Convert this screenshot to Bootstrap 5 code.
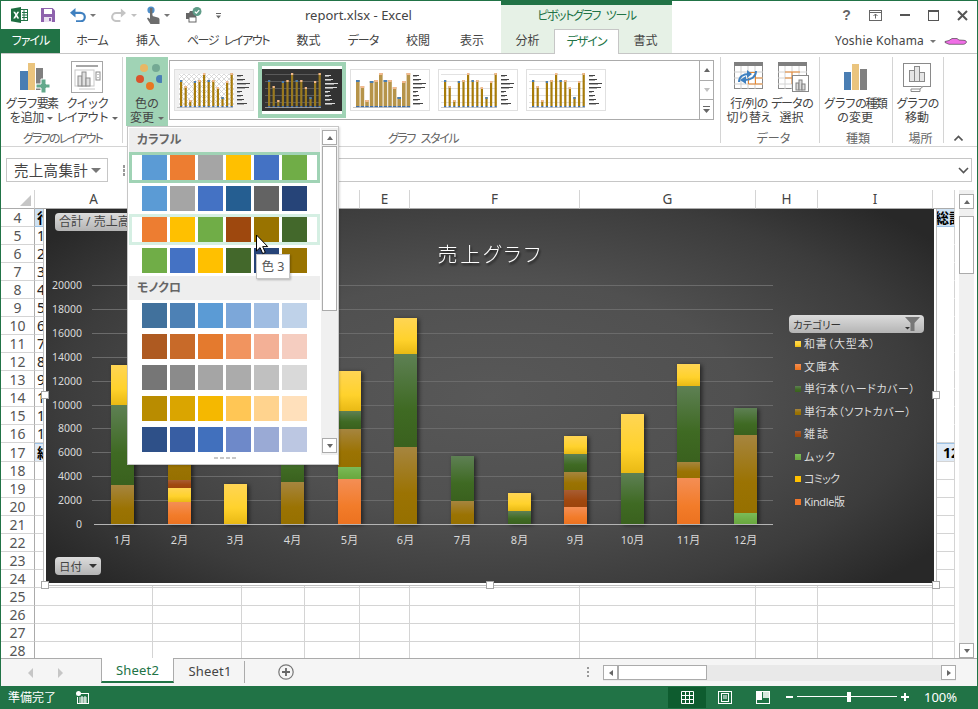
<!DOCTYPE html>
<html lang="ja">
<head>
<meta charset="utf-8">
<title>report.xlsx - Excel</title>
<link href="https://cdn.jsdelivr.net/npm/bootstrap@5.3.0/dist/css/bootstrap.min.css" rel="stylesheet">
<style>
html,body{margin:0;width:978px;height:709px;overflow:hidden;background:#fff}
body{font-family:"Noto Sans","Noto Sans CJK JP",sans-serif;font-feature-settings:"palt";font-size:12px;color:#444;line-height:14px}
.xl-win{position:relative;width:978px;height:709px;border:1px solid #217346;border-bottom:0;background:#fff;overflow:hidden}
svg{display:block;flex:none}
/* title row */
.xl-title{height:28px}
.xl-qat{width:500px;padding-left:10px;flex:none}
.m4{margin-left:4px}.m5{margin-left:5px}.m9{margin-left:9px}.m13{margin-left:13px}.m14{margin-left:14px}.m15{margin-left:15px}
.xl-doc{margin-left:84px;font-size:13px;color:#444}
.xl-context{width:171px;flex:none;border-top:4px solid #217346;background:#e6f1e6;color:#217346;text-align:center;padding-top:4px;font-size:12px;line-height:14px;letter-spacing:-1.4px;word-spacing:4px}
.xl-ctl{width:29px;height:28px;flex:none}
.xl-help{font-weight:700;font-size:14px;color:#666;font-family:"Liberation Sans",sans-serif}
/* tab row */
.xl-tabs{height:25px;border-bottom:1px solid #c6c6c6;flex-wrap:nowrap}
.xl-tabs .nav-link{padding:0;height:24px;line-height:24px;font-size:12px;color:#444;text-align:center;flex:none;border:0;border-radius:0}
.xl-tabs .nav-link.xl-kn{letter-spacing:-1px}
.xl-tabs .nav-link.xl-kns{letter-spacing:-1.4px;word-spacing:4px}
.xl-tabs .xl-file{width:59px;background:#217346;color:#fff}
.t64{width:64px}.t48{width:48px}.t112{width:112px}.t49{width:49px}.t60{width:60px}.t50{width:50px}.t58{width:58px}.t53{width:53px}
.xl-tabs .xl-active{width:65px;height:25px;background:#fff;border:1px solid #c6c6c6;border-bottom:0;color:#217346}
.xl-ctxgroup{background:#e6f1e6;width:171px;flex:none;height:24px}
.xl-user{font-size:12px;color:#444;margin-right:10px;letter-spacing:.2px}
/* ribbon */
.xl-ribbon{height:93px;border-bottom:1px solid #d4d4d4;padding-top:3px}
.xl-grp{height:86px;border-right:1px solid #d4d4d4;flex:none}
.g1{width:122px;padding-left:2px}.g2{width:598px;padding-left:3px}.g3{width:99px;padding-left:7px}.g4{width:73px;padding-left:4px}.g5{width:51px;padding-left:5px}
.xl-grpbody{height:69px}
.xl-grplabel{margin-top:5px;height:16px;line-height:16px;text-align:center;color:#666;font-size:12px}
.xl-grplabel.xl-tight{letter-spacing:-1.8px}
.xl-grplabel.xl-tights{letter-spacing:-1.4px;word-spacing:4px}
.xl-rbtn.btn{padding:0;border:0;border-radius:0;font-size:12px;line-height:14px;color:#444;display:flex;flex-direction:column;align-items:center;height:69px;flex:none;white-space:nowrap}
.xl-rbtn .xl-ico{height:40px;flex:none;display:flex;align-items:center;justify-content:center;width:100%}
.xl-rbtn .xl-ks{letter-spacing:-1.6px}
.xl-rbtn .xl-ks1{letter-spacing:-.7px}
.xl-rbtn.xl-on{background:#a0d3b5}
.w57{width:57px}.w54{width:54px}.w42{width:42px}.w43{width:43px}.w62{width:62px}.w38{width:38px}
.xl-car{display:inline-block;width:0;height:0;border-left:3px solid transparent;border-right:3px solid transparent;border-top:3px solid #666;vertical-align:2px;margin-left:4px}
.xl-gallery{width:545px;height:60px;margin:3px 0 0 1px;border:1px solid #ababab;flex:none;background:#fff}
.xl-thumbs{padding:1px 0 0 0;flex:1}
.xl-thumb{width:88px;height:56px;padding:7px 4px;flex:none}
.xl-thumb.xl-sel{border:0;background:#a0d3b5;padding:4px}
.xl-thumb.xl-sel .xl-whitebox{background:#fff;height:48px;padding-top:3px}
.xl-galbtns{width:14px;border-left:1px solid #ababab;flex:none}
.xl-galbtn{flex:1;border-bottom:1px solid #ababab;display:flex;align-items:center;justify-content:center}
.xl-galbtn:last-child{border-bottom:0}
.tri-u{width:0;height:0;border:3px solid transparent;border-top:0;border-bottom:4px solid #666}
.tri-d{width:0;height:0;border:3px solid transparent;border-bottom:0;border-top:4px solid #666}
.tri-l{width:0;height:0;border:3px solid transparent;border-left:0;border-right:4px solid #666}
.tri-r{width:0;height:0;border:3px solid transparent;border-right:0;border-left:4px solid #666}
/* formula */
.xl-fbar{height:43px;padding:11px 0 0 5px}
.xl-name{width:102px;height:24px;border:1px solid #c6c6c6;font-size:14.5px;padding-left:7px;flex:none;color:#444;letter-spacing:.3px}
.xl-grip{width:2px;height:3px;background:#999;box-shadow:0 4px 0 #999,0 8px 0 #999;margin:7px 0 0 15px;flex:none}
.xl-input{height:24px;margin-left:7px;width:840px;border:1px solid #c6c6c6;flex:none}
.xl-chev{margin:9px 0 0 -14px}
/* sheet */
.xl-sheet{position:relative;height:468px;overflow:hidden}
.xl-grid{table-layout:fixed;width:954px;border-collapse:separate;border-spacing:0;flex:none}
.xl-grid th,.xl-grid td{height:18px;padding:0;border-right:1px solid #d4d4d4;border-bottom:1px solid #d4d4d4;overflow:hidden;white-space:nowrap;line-height:17px;font-weight:400;font-size:14px;color:#222}
.xl-grid thead th{height:19px;border-bottom:1px solid #ababab;text-align:center;color:#444;font-size:13.5px;position:relative}
.xl-grid th.xl-rh{text-align:center;border-right:1px solid #ababab;color:#555;font-size:14px}
.xl-grid td{padding-left:2px}
.xl-grid td.xl-hd{background:#cfe2f3;border-bottom:1px solid #9dc3e6;font-weight:700;color:#000}
.xl-grid td.xl-tot{background:#dfeaf6;font-weight:700;color:#000;border-top:1px solid #9dc3e6}
.xl-grid td.xl-nob{border-bottom-color:transparent}
.xl-grid td.xl-pad{padding-left:10px}
.xl-corner{position:absolute;right:3px;bottom:2px;width:0;height:0;border-style:solid;border-width:0 0 11px 11px;border-color:transparent transparent #c6c6c6 transparent}
.xl-vs{width:22px;flex:none;padding:0 3px 0 4px;background:#fff}
.xl-vtrack{background:#f0f0f0;height:100%;padding-top:4px;position:relative}
.xl-sbtn{background:#fff;border:1px solid #ababab;width:15px;height:15px;display:flex;align-items:center;justify-content:center}
.xl-vthumb{background:#fff;border:1px solid #ababab;width:15px;height:58px;margin-top:7px}
.xl-vdown{position:absolute;left:0;bottom:0}
/* chart */
.xl-chart{position:absolute;left:42px;top:19px;width:894px;height:377px;border:1px solid #c0c0c0;border-top:0;padding:0 2px 2px 2px;background:#fff}
.xl-chartbg{width:888px;height:374px;background:radial-gradient(ellipse 62% 70% at 50% 50%,#585858 0%,#505050 45%,#3c3c3c 78%,#282828 100%);overflow:hidden}
.xl-h{position:absolute;width:8px;height:8px;background:#fff;border:1px solid #a6a6a6}
.xl-h1{left:-3px;top:182px}.xl-h2{left:-3px;top:372px}.xl-h3{left:442px;top:372px}.xl-h4{left:888px;top:182px}.xl-h5{left:888px;top:372px}
.xl-chart text{font-family:"Noto Sans","Noto Sans CJK JP",sans-serif}
/* palette */
.xl-palette.dropdown-menu{display:block;position:absolute;left:126px;top:125px;width:212px;height:339px;min-width:0;padding:1px;margin:0;border:1px solid #c6c6c6;border-radius:0;background:#fff;box-shadow:1px 1px 2px rgba(0,0,0,.15);z-index:5;font-size:12px}
.xl-palcol{width:191px;flex:none}
.xl-palhead{height:24px;line-height:24px;background:#eee;padding-left:8px;color:#666;font-weight:700;font-size:12px}
.xl-palrow{height:31px;border:3px solid transparent;padding-left:10px;gap:3px}
.xl-palrow.xl-r1{border-color:#a0d3b5}
.xl-palrow.xl-r3{border-color:#d5efe3}
.xl-sw{width:25px;height:25px;flex:none}
.xl-palgrip{height:9px;width:191px;gap:2px;padding-top:2px}
.xl-palgrip i{width:4px;height:2px;background:#c8c8c8;display:block}
.xl-palsb{width:17px;margin-left:1px;flex:none;background:#f0f0f0;height:327px;padding:2px 1px;position:relative}
.xl-palthumb{background:#fff;border:1px solid #ababab;height:165px;width:15px;margin-top:1px}
.xl-palsb .xl-sbdown{position:absolute;left:1px;bottom:2px}
.xl-tip{position:absolute;left:255px;top:253px;width:34px;height:25px;background:#fff;border:1px solid #c6c6c6;box-shadow:1px 1px 2px rgba(0,0,0,.25);z-index:7;text-align:center;line-height:23px;font-size:12.5px;color:#555}
.xl-cursor{position:absolute;left:254px;top:233px;z-index:8}
/* sheet tabs */
.xl-strip{height:28px;background:#f5f5f5;border-top:1px solid #ababab}
.xl-arrows{width:100px;flex:none;padding-left:27px;gap:25px;height:27px}
.xl-arrows .tri-l{border-right-color:#c6c6c6;border-width:5px 5px 5px 0}
.xl-arrows .tri-r{border-left-color:#c6c6c6;border-width:5px 0 5px 5px}
.xl-sheettab{width:73px;height:25px;margin-top:-1px;line-height:24px;background:#fff;border:1px solid #ababab;border-top:0;border-bottom:2px solid #217346;color:#217346;text-align:center;font-size:13px;flex:none;letter-spacing:.2px}
.xl-sheettab2{width:72px;height:22px;line-height:20px;text-align:center;font-size:13px;color:#444;border-right:1px solid #ababab;flex:none;margin-top:2px;margin-left:-1px;padding-left:3px;letter-spacing:.2px}
.xl-plus{margin-left:33px;margin-top:5px}
.xl-hdots{position:absolute;left:586px;top:8px;width:2px;height:2px;background:#999;box-shadow:0 4px 0 #999,0 8px 0 #999}
.xl-hs{position:absolute;left:602px;top:6px;width:353px;height:16px;background:#e9e9e9}
.xl-hs .xl-sbtn{height:15px;flex:none}
.xl-hthumb{width:89px;height:15px;background:#fff;border:1px solid #ababab;flex:none}
/* status */
.xl-status{height:23px;background:#217346;color:#fff;position:relative}
.xl-ready{margin-left:7px;font-size:12px}
.xl-macro{margin-left:20px}
.xl-vbtn{position:absolute;top:1px;height:21px;display:flex;align-items:center;justify-content:center}
.xl-vn{left:667px;width:38px;background:#0e5c2f}
.xl-vl{left:717px}.xl-vp{left:755px}
.xl-pct{position:absolute;left:923px;top:0;line-height:23px;font-size:13px;color:#fff}
.xl-zoomline{position:absolute;left:796px;top:10px;width:100px;height:1px;background:#fff}
.xl-zoomth{position:absolute;left:846px;top:6px;width:4px;height:10px;background:#fff}
.xl-zm{position:absolute;left:785px;top:10px;width:7px;height:2px;background:#fff}
.xl-zp{position:absolute;left:900px;top:10px;width:8px;height:2px;background:#fff}
.xl-zp::after{content:"";position:absolute;left:3px;top:-3px;width:2px;height:8px;background:#fff}
.xl-qcar{border-top-color:#777;border-top-width:3px}
.xl-qcarl{border-top-color:#c0c0c0;border-top-width:3px}
.xl-ucar{margin-left:6px}
.xl-blob{margin-left:8px}
.xl-up3{margin-top:-3px}
.xl-ml6{margin-left:6px}.xl-ml3{margin-left:3px}
.xl-collapse{padding:0 4px 5px 0}
.xl-namecar{margin-right:6px;border-width:5px 5px 0;border-top-color:#777}
.xl-gd{border-top-color:#c0c0c0}
</style>
</head>
<body>
<div class="xl-win d-flex flex-column">

  <!-- title bar -->
  <div class="xl-title d-flex align-items-stretch">
    <div class="xl-qat d-flex align-items-center">
      <svg width="17" height="16" viewBox="0 0 17 16"><rect x="8.5" y="2.5" width="8" height="11" fill="#fff" stroke="#217346"/><path d="M11 5.5h5M11 8h5M11 10.5h5M13 3v10" stroke="#217346" fill="none"/><path d="M0 1.8 10 0v16L0 14.2z" fill="#1e6e41"/><path d="M2.2 4.8h2l1 1.9 1-1.9h2L6.2 8l2 3.4h-2l-1-2-1 2h-2L4.3 8z" fill="#fff"/></svg>
      <svg class="m13" width="14" height="14" viewBox="0 0 14 14"><path d="M0 0h11.5L14 2.5V14H0z" fill="#8e62ad"/><rect x="3" y="1" width="8" height="5" fill="#fff"/><rect x="3" y="9" width="8" height="5" fill="#e9e0f0"/><rect x="8" y="10" width="2" height="3" fill="#8e62ad"/></svg>
      <svg class="m15" width="16" height="14" viewBox="0 0 16 14"><path d="M4 4.8h6.5a4.3 4.3 0 0 1 0 8.6H6" fill="none" stroke="#3f80c0" stroke-width="2.2"/><path d="M5.5 0 0 4.8l5.5 4.8z" fill="#3f80c0"/></svg>
      <span class="tri-d m4 xl-qcar"></span>
      <svg class="m15" width="15" height="14" viewBox="0 0 16 14"><path d="M12 4.8H5.5a4.3 4.3 0 0 0 0 8.6H10" fill="none" stroke="#c4c4c4" stroke-width="2.2"/><path d="M10.5 0 16 4.8l-5.5 4.8z" fill="#c4c4c4"/></svg>
      <span class="tri-d m5 xl-qcarl"></span>
      <svg class="m9" width="14" height="18" viewBox="0 0 14 18"><circle cx="5" cy="4" r="3.6" fill="#4f8ec9"/><rect x="4" y="2" width="2.4" height="9" fill="#6d6d6d"/><path d="M4 9h2.4v1l5.4 1.4c1 .3 1.7 1 1.7 2V18H4.5L1 12.5l1-1 2 1.5z" fill="#6d6d6d"/></svg>
      <span class="tri-d m4 xl-qcar"></span>
      <svg class="m15" width="17" height="17" viewBox="0 0 17 17"><path d="M1 6h3l1-2h3v2h3v6H1z" fill="#666"/><rect x="4" y="10" width="7" height="5" fill="#fff" stroke="#666"/><circle cx="12" cy="4.5" r="4.5" fill="#5f9c88"/><path d="M9.8 4.6l1.6 1.6 2.8-3" fill="none" stroke="#fff" stroke-width="1.2"/></svg>
      <svg class="m14" width="5" height="7" viewBox="0 0 5 7"><path d="M0 1h5v1H0z" fill="#666"/><path d="M0 3.5h5L2.5 6.5z" fill="#666"/></svg>
      <span class="xl-doc">report.xlsx - Excel</span>
    </div>
    <div class="xl-context">ピボットグラフ ツール</div>
    <div class="flex-grow-1"></div>
    <div class="xl-ctl d-flex align-items-center justify-content-center xl-help">?</div>
    <div class="xl-ctl d-flex align-items-center justify-content-center"><svg width="13" height="11" viewBox="0 0 13 11"><rect x=".5" y=".5" width="12" height="10" fill="none" stroke="#666"/><path d="M.5 2.5h12" stroke="#666"/><path d="M6.5 4v4.5M4.5 6l2-2 2 2" fill="none" stroke="#666"/></svg></div>
    <div class="xl-ctl d-flex align-items-center justify-content-center"><svg width="10" height="2" viewBox="0 0 10 2"><rect width="10" height="2" fill="#555"/></svg></div>
    <div class="xl-ctl d-flex align-items-center justify-content-center"><svg width="11" height="11" viewBox="0 0 11 11"><rect x=".5" y=".5" width="10" height="10" fill="none" stroke="#555"/><rect x="0" y="0" width="11" height="2" fill="#555"/></svg></div>
    <div class="xl-ctl d-flex align-items-center justify-content-center"><svg width="11" height="11" viewBox="0 0 11 11"><path d="M1 1l9 9M10 1l-9 9" stroke="#555" stroke-width="2"/></svg></div>
  </div>

  <!-- ribbon tabs -->
  <div class="xl-tabs d-flex">
    <ul class="nav flex-nowrap">
      <li><a class="nav-link xl-file xl-kn">ファイル</a></li>
      <li><a class="nav-link t64 xl-kn">ホーム</a></li>
      <li><a class="nav-link t48">挿入</a></li>
      <li><a class="nav-link t112 xl-kns">ページ レイアウト</a></li>
      <li><a class="nav-link t49">数式</a></li>
      <li><a class="nav-link t60 xl-kn">データ</a></li>
      <li><a class="nav-link t50">校閲</a></li>
      <li><a class="nav-link t58">表示</a></li>
    </ul>
    <ul class="nav flex-nowrap xl-ctxgroup">
      <li><a class="nav-link t53">分析</a></li>
      <li><a class="nav-link xl-active xl-kn">デザイン</a></li>
      <li><a class="nav-link t53">書式</a></li>
    </ul>
    <div class="flex-grow-1"></div>
    <div class="d-flex align-items-center xl-user"><span>Yoshie Kohama</span>
      <span class="tri-d xl-ucar xl-qcar"></span>
      <svg class="xl-blob" width="23" height="9" viewBox="0 0 23 9"><path d="M1 4.5 5 3.5 8 1.5h5l2 1.5 5 .3c2 .3 2.5 1.2 2.5 1.7s-1 2-3 2.3H5L1 5.5z" fill="#f06ee6" stroke="#333" stroke-width=".6"/></svg>
    </div>
  </div>

  <!-- ribbon -->
  <div class="xl-ribbon d-flex">
    <div class="xl-grp g1">
      <div class="xl-grpbody d-flex">
        <button class="btn xl-rbtn w57"><span class="xl-ico"><svg class="xl-ml6" width="30" height="31" viewBox="0 0 30 31"><rect x="0" y="9" width="8" height="19" fill="#4a7eb3"/><rect x="8" y="1" width="7" height="27" fill="#eac47e"/><rect x="16" y="6" width="7" height="22" fill="#808080"/><path d="M21 17h5v5h4v4h-4v5h-5v-5h-5v-4h5z" fill="#63a98c" stroke="#fff"/></svg></span><span class="xl-ks">グラフ要素</span><span class="xl-ks1">を追加<i class="xl-car"></i></span></button>
        <button class="btn xl-rbtn w54"><span class="xl-ico"><svg width="32" height="32" viewBox="0 0 32 32"><rect x=".5" y=".5" width="31" height="31" fill="#fff" stroke="#a6a6a6"/><path d="M5 5h22" stroke="#a6a6a6" stroke-width="2"/><rect x="4" y="9" width="19" height="16" fill="none" stroke="#c8c8c8"/><rect x="7" y="15" width="4" height="10" fill="#e0e0e0" stroke="#8c8c8c"/><rect x="11" y="11" width="4" height="14" fill="#e0e0e0" stroke="#8c8c8c"/><rect x="15" y="17" width="4" height="8" fill="#e0e0e0" stroke="#8c8c8c"/><rect x="25" y="11" width="4" height="8" fill="#fff" stroke="#8c8c8c"/><path d="M27 13v1M27 16v1" stroke="#8c8c8c"/><path d="M8 28h16" stroke="#c8c8c8"/></svg></span><span class="xl-ks">クイック</span><span class="xl-ks">レイアウト<i class="xl-car"></i></span></button>
      </div>
      <div class="xl-grplabel xl-tight">グラフのレイアウト</div>
    </div>
    <div class="xl-grp g2">
      <div class="xl-grpbody d-flex">
        <button class="btn xl-rbtn xl-on w42"><span class="xl-ico"><svg width="30" height="30" viewBox="0 0 30 30"><circle cx="12" cy="6" r="4" fill="#e8b765"/><circle cx="24" cy="6" r="4" fill="#74a994"/><circle cx="8" cy="17" r="4" fill="#d9532c"/><circle cx="28" cy="17" r="4" fill="#4a7fb5"/><circle cx="18" cy="24" r="4" fill="#e87722"/></svg></span><span>色の</span><span>変更<i class="xl-car"></i></span></button>
        <div class="xl-gallery d-flex">
          <div class="xl-thumbs d-flex">
            <div class="xl-thumb"><svg class="js-thumb" data-k="hatch" width="80" height="42"></svg></div>
            <div class="xl-thumb xl-sel"><div class="xl-whitebox"><svg class="js-thumb" data-k="dark" width="80" height="42"></svg></div></div>
            <div class="xl-thumb"><svg class="js-thumb" data-k="plain" width="80" height="42"></svg></div>
            <div class="xl-thumb"><svg class="js-thumb" data-k="line" width="80" height="42"></svg></div>
            <div class="xl-thumb"><svg class="js-thumb" data-k="line" width="80" height="42"></svg></div>
          </div>
          <div class="xl-galbtns d-flex flex-column">
            <div class="xl-galbtn"><i class="tri-u"></i></div>
            <div class="xl-galbtn"><i class="tri-d xl-gd"></i></div>
            <div class="xl-galbtn"><svg width="7" height="7" viewBox="0 0 7 7"><path d="M0 0h7v1H0z" fill="#666"/><path d="M0 3h7L3.5 7z" fill="#666"/></svg></div>
          </div>
        </div>
      </div>
      <div class="xl-grplabel xl-tights">グラフ スタイル</div>
    </div>
    <div class="xl-grp g3">
      <div class="xl-grpbody d-flex">
        <button class="btn xl-rbtn w42"><span class="xl-ico"><svg class="xl-up3" width="30" height="28" viewBox="0 0 30 28"><rect x=".5" y=".5" width="28" height="26" fill="#fff" stroke="#8a8a8a"/><rect width="29" height="4" fill="#7f7f7f"/><path d="M0 10h29M0 16h29M0 22h29M7 4v23M14 4v23M21 4v23" stroke="#cfcfcf"/><path d="M14.5 10.5h7v5.5h7M14.5 16v6h14M21.5 16v6" fill="none" stroke="#e8872f"/><path d="M5 20c0-5 4-8 10-8M22 9c0 6-5 9-11 9" fill="none" stroke="#3f80c0" stroke-width="2"/><path d="M13 8l5 4-5 4zM12 14v8l-6-4z" fill="#3f80c0"/></svg></span><span class="xl-ks1">行/列の</span><span class="xl-ks1">切り替え</span></button>
        <button class="btn xl-rbtn w43"><span class="xl-ico"><svg class="xl-ml3" width="31" height="30" viewBox="0 0 31 30"><rect x=".5" y=".5" width="28" height="26" fill="#fff" stroke="#8a8a8a"/><rect width="29" height="4" fill="#7f7f7f"/><path d="M0 10h29M0 16h29M0 22h29M7 4v23M14 4v23M21 4v23" stroke="#d4d4d4"/><path d="M7 10h15M7 16h7M14 10v12" stroke="#e8872f" fill="none"/><rect x="14.5" y="13.5" width="16" height="16" fill="#fff" stroke="#8a8a8a"/><rect x="18" y="21" width="3" height="7" fill="#ddd" stroke="#808080"/><rect x="21" y="18" width="3" height="10" fill="#ddd" stroke="#808080"/><rect x="24" y="22" width="3" height="6" fill="#ddd" stroke="#808080"/></svg></span><span class="xl-ks">データの</span><span>選択</span></button>
      </div>
      <div class="xl-grplabel">データ</div>
    </div>
    <div class="xl-grp g4">
      <div class="xl-grpbody d-flex">
        <button class="btn xl-rbtn w62"><span class="xl-ico"><svg width="23" height="26" viewBox="0 0 23 26"><rect y="8" width="7" height="18" fill="#4a7eb3"/><rect x="8" width="7" height="26" fill="#eac47e"/><rect x="16" y="5" width="7" height="21" fill="#808080"/></svg></span><span class="xl-ks">グラフの種類</span><span>の変更</span></button>
      </div>
      <div class="xl-grplabel">種類</div>
    </div>
    <div class="xl-grp g5">
      <div class="xl-grpbody d-flex">
        <button class="btn xl-rbtn w38"><span class="xl-ico"><svg width="28" height="29" viewBox="0 0 28 29"><rect x=".5" y=".5" width="27" height="23" fill="#fff" stroke="#8a8a8a"/><rect x="6.5" y="7.5" width="5" height="11" fill="#e6e6e6" stroke="#8a8a8a"/><rect x="11.5" y="3.5" width="5" height="15" fill="#e6e6e6" stroke="#8a8a8a"/><rect x="16.5" y="9.5" width="5" height="9" fill="#e6e6e6" stroke="#8a8a8a"/><path d="M8 26h9l3-2.5M8 26v2.5h9V26" fill="#fff" stroke="#8a8a8a"/></svg></span><span class="xl-ks">グラフの</span><span>移動</span></button>
      </div>
      <div class="xl-grplabel">場所</div>
    </div>
    <div class="flex-grow-1 d-flex justify-content-center align-items-end xl-collapse"><svg width="9" height="6" viewBox="0 0 9 6"><path d="M.5 5.5 4.5 1.5l4 4" fill="none" stroke="#555" stroke-width="1.6"/></svg></div>
  </div>

  <!-- formula bar -->
  <div class="xl-fbar d-flex align-items-start">
    <div class="xl-name d-flex align-items-center justify-content-between"><span>売上高集計</span><span class="tri-d xl-namecar"></span></div>
    <div class="xl-grip"></div>
    <div class="xl-input d-flex align-items-center justify-content-end"></div>
    <svg class="xl-chev" width="11" height="7" viewBox="0 0 11 7"><path d="M1 1l4.5 4.5L10 1" fill="none" stroke="#555" stroke-width="1.6"/></svg>
  </div>

  <!-- sheet -->
  <div class="xl-sheet d-flex">
    <table class="xl-grid" id="grid"></table>
    <div class="xl-vs">
      <div class="xl-vtrack">
        <div class="xl-sbtn"><i class="tri-u"></i></div>
        <div class="xl-vthumb"></div>
        <div class="xl-sbtn xl-vdown"><i class="tri-d"></i></div>
      </div>
    </div>
    <div class="xl-chart">
      <div class="xl-chartbg"><svg id="chart" width="888" height="374" viewBox="46 209 888 374"></svg></div>
      <i class="xl-h xl-h1"></i><i class="xl-h xl-h2"></i><i class="xl-h xl-h3"></i><i class="xl-h xl-h4"></i><i class="xl-h xl-h5"></i>
    </div>
  </div>

  <!-- sheet tab strip -->
  <div class="xl-strip d-flex position-relative">
    <div class="xl-arrows d-flex align-items-center"><i class="tri-l"></i><i class="tri-r"></i></div>
    <div class="xl-sheettab">Sheet2</div>
    <div class="xl-sheettab2">Sheet1</div>
    <svg class="xl-plus" width="16" height="16" viewBox="0 0 16 16"><circle cx="8" cy="8" r="7.2" fill="none" stroke="#777" stroke-width="1.2"/><path d="M8 4v8M4 8h8" stroke="#666" stroke-width="1.8"/></svg>
    <div class="xl-hdots"></div>
    <div class="xl-hs d-flex">
      <div class="xl-sbtn"><i class="tri-l"></i></div>
      <div class="xl-hthumb"></div>
      <div class="flex-grow-1"></div>
      <div class="xl-sbtn"><i class="tri-r"></i></div>
    </div>
  </div>

  <!-- status bar -->
  <div class="xl-status d-flex align-items-center">
    <span class="xl-ready">準備完了</span>
    <svg class="xl-macro" width="13" height="13" viewBox="0 0 13 13"><circle cx="2.5" cy="2.5" r="2.5" fill="#fff"/><path d="M5 2h8v11H1V6h1v6h10V3H5z" fill="#fff"/><path d="M3 7h8M3 9h8M3 11h8M6 5v7M9 5v7" stroke="#fff"/></svg>
    <div class="xl-vbtn xl-vn"><svg width="13" height="13" viewBox="0 0 13 13"><path d="M.5.5h12v12H.5zM.5 4.5h12M.5 8.5h12M4.5.5v12M8.5.5v12" fill="none" stroke="#fff"/></svg></div>
    <div class="xl-vbtn xl-vl"><svg width="14" height="13" viewBox="0 0 14 13"><rect x=".5" y=".5" width="13" height="12" fill="none" stroke="#fff"/><rect x="3.5" y="2.5" width="7" height="8" fill="none" stroke="#fff"/><path d="M5 5h4M5 7h4" stroke="#fff"/></svg></div>
    <div class="xl-vbtn xl-vp"><svg width="14" height="13" viewBox="0 0 14 13"><rect x=".5" y=".5" width="13" height="12" fill="none" stroke="#fff"/><rect x="1" y="1" width="5" height="8" fill="#fff"/><rect x="7" y="1" width="6" height="6" fill="#d8e8de"/></svg></div>
    <i class="xl-zm"></i><i class="xl-zoomline"></i><i class="xl-zoomth"></i><i class="xl-zp"></i>
    <span class="xl-pct">100%</span>
  </div>

  <!-- colour palette -->
  <div class="xl-palette dropdown-menu d-flex">
    <div>
      <div class="xl-palcol" id="pal"></div>
      <div class="xl-palgrip d-flex justify-content-center"><i></i><i></i><i></i><i></i></div>
    </div>
    <div class="xl-palsb">
      <div class="xl-sbtn"><i class="tri-u"></i></div>
      <div class="xl-palthumb"></div>
      <div class="xl-sbtn xl-sbdown"><i class="tri-d"></i></div>
    </div>
  </div>
  <div class="xl-tip">色 3</div>
  <svg class="xl-cursor" width="14" height="22" viewBox="0 0 14 22"><path d="M1.5 1v16l3.6-3.4 2.6 6 2.6-1.1-2.6-5.9h5z" fill="#fff" stroke="#000"/></svg>
</div>

<script>
/* palette */
const palette=[
 ['カラフル'],
 ['5b9bd5 ed7d31 a5a5a5 ffc000 4472c4 70ad47','xl-r1'],
 ['5b9bd5 a5a5a5 4472c4 255e91 636363 264478',''],
 ['ed7d31 ffc000 70ad47 9e480e 997300 43682b','xl-r3'],
 ['70ad47 4472c4 ffc000 43682b 264478 997300',''],
 ['モノクロ'],
 ['41719c 4d81b5 5b9bd5 7ca7d9 a0bde2 bfd2e9',''],
 ['ae5a21 c86a29 e47a2e f1945f f3b096 f5cdc0',''],
 ['767676 8b8b8b a5a5a5 ababab c0c0c0 d9d9d9',''],
 ['b98c00 daa500 f5b800 ffc655 ffd38e ffe0bb',''],
 ['2e5088 385ea3 4170bd 6e89c9 9aaad5 bcc7e2','']];
document.getElementById('pal').innerHTML=palette.map(r=>r.length==1
 ?`<div class="xl-palhead">${r[0]}</div>`
 :`<div class="xl-palrow d-flex ${r[1]}">${r[0].split(' ').map(c=>`<div class="xl-sw" style="background:#${c}"></div>`).join('')}</div>`).join('');

/* sheet grid */
const cols=[34,118,89,63,55,50,170,176,62,115,22],names=['','A','B','C','D','E','F','G','H','I',''];
let h='<colgroup>'+cols.map(w=>`<col style="width:${w}px">`).join('')+'</colgroup><thead><tr>'+
 names.map((n,i)=>`<th>${i==0?'<i class="xl-corner"></i>':n}</th>`).join('')+'</tr></thead><tbody>';
const colA={4:'行ラベル',5:'1月',6:'2月',7:'3月',8:'4月',9:'5月',10:'6月',11:'7月',12:'8月',13:'9月',14:'10月',15:'11月',16:'12月',17:'総計'};
for(let r=4;r<=28;r++){
 h+=`<tr><th class="xl-rh">${r}</th>`;
 for(let c=1;c<=10;c++){
  let cls='',t='';
  if(c==1&&colA[r]){t=colA[r];cls=r==4?'xl-hd':r==17?'xl-tot':'';}
  if(c==10){ if(r==4){t='総計';cls='xl-hd';} else if(r==17){t='12';cls='xl-tot xl-pad';} else if(r>4&&r<16){cls='xl-nob';} }
  h+=`<td class="${cls}">${t}</td>`;
 }
 h+='</tr>';
}
document.getElementById('grid').innerHTML=h+'</tbody>';

/* chart */
const grads={
 y:['#ffd554','#ffd22c','#e9b914'],o:['#f48e55','#f27c2a','#ec7220'],g:['#5e8054','#3f6a23','#3a611e'],
 b:['#a6853f','#9b7303','#967000'],r:['#a85d33','#a0480f','#9c440c'],l:['#7abb58','#6fae46','#69a83f'],
 k:['#ffc000','#ffc000','#ffc000'],w:['#f0762a','#f0762a','#f0762a']};
let s='<defs>'+Object.keys(grads).map(k=>`<linearGradient id="g${k}" x1="0" y1="0" x2="0" y2="1"><stop offset="0" stop-color="${grads[k][0]}"/><stop offset=".6" stop-color="${grads[k][1]}"/><stop offset="1" stop-color="${grads[k][2]}"/></linearGradient>`).join('')+
 `<linearGradient id="pill" x1="0" y1="0" x2="0" y2="1"><stop offset="0" stop-color="#dcdcdc"/><stop offset="1" stop-color="#b4b4b4"/></linearGradient></defs>`;
s+=`<text x="489" y="262" text-anchor="middle" font-size="20" textLength="103" fill="#fff" style="font-weight:300;filter:drop-shadow(1px 2px 1px rgba(0,0,0,.7))">売上グラフ</text>`;
for(let i=0;i<=10;i++){
 const y=524-i*23.9;
 if(i) s+=`<rect x="92" y="${y.toFixed(0)}" width="681" height="1" fill="#6b6b6b"/>`;
 s+=`<text x="82" y="${(y+4).toFixed(0)}" text-anchor="end" font-size="10.5" fill="#d9d9d9">${i*2000}</text>`;
}
const bars=[
 [111,[[365,'y'],[405,'g'],[485,'b']]],
 [168,[[440,'b'],[480,'r'],[488,'y'],[502,'o']]],
 [224,[[484,'y']]],
 [281,[[450,'g'],[482,'b']]],
 [338,[[371,'y'],[411,'g'],[429,'b'],[467,'l'],[479,'o']]],
 [394,[[318,'y'],[354,'g'],[447,'b']]],
 [451,[[456,'g'],[501,'b']]],
 [508,[[493,'y'],[511,'g']]],
 [564,[[436,'y'],[454,'g'],[472,'b'],[490,'r'],[507,'o']]],
 [621,[[414,'y'],[473,'g']]],
 [677,[[364,'y'],[386,'g'],[462,'b'],[478,'o']]],
 [734,[[408,'g'],[435,'b'],[513,'l']]]];
s+='<g style="filter:drop-shadow(2px 1px 2px rgba(0,0,0,.55))">';
bars.forEach(b=>b[1].forEach((g,i)=>{const e=i+1<b[1].length?b[1][i+1][0]:524;
 s+=`<rect x="${b[0]}" y="${g[0]}" width="23" height="${e-g[0]}" fill="url(#g${g[1]})"/>`;}));
s+='</g><rect x="94" y="524" width="679" height="1" fill="#b4b4b4"/>';
bars.forEach((b,i)=>{s+=`<text x="${b[0]+11.5}" y="544" text-anchor="middle" font-size="11" fill="#d9d9d9">${i+1}月</text>`;});
/* field buttons */
s+=`<rect x="55" y="213" width="100" height="18" rx="4" fill="url(#pill)"/><text x="59" y="226" font-size="12" fill="#444">合計 / 売上高</text>`;
s+=`<rect x="55" y="557" width="46" height="18" rx="4" fill="url(#pill)"/><text x="59" y="571" font-size="11.5" fill="#444">日付</text><path d="M89 564h8l-4 4z" fill="#333"/>`;
s+=`<rect x="789" y="315" width="135" height="18" rx="4" fill="url(#pill)"/><text x="793" y="329" font-size="10.5" fill="#333">カテゴリー</text><path d="M905 327h5l-2.5 2.5z" fill="#333"/><path d="M905 317h15l-5.5 6v8h-4v-8z" fill="#777"/>`;
const leg=[['和書（大型本）','y',71],['文庫本','o',35],['単行本（ハードカバー）','g',111],['単行本（ソフトカバー）','b',107],['雑誌','r',24],['ムック','l',31],['コミック','k',36],['Kindle版','w',41]];
leg.forEach((l,i)=>{const y=[344,367,389,412,434,457,479,502][i];
 s+=`<rect x="795" y="${y-3}" width="6" height="6" fill="url(#g${l[1]})"/><text x="804" y="${y+4}" font-size="11" textLength="${l[2]}" fill="#dcdcdc">${l[0]}</text>`;});
document.getElementById('chart').innerHTML=s;

/* gallery thumbnails */
const tb=[26,20,6,25,26,33,26,26,19,9,25,33];
document.querySelectorAll('.js-thumb').forEach(t=>{
 const k=t.dataset.k,dark=k=='dark';
 let o=`<rect x=".5" y=".5" width="79" height="41" fill="${dark?'#333':'#fff'}" stroke="${dark?'#333':'#e0e0e0'}"/>`;
 if(k=='hatch'){o+=`<rect x="1" y="1" width="78" height="40" fill="#f1f1f1"/><defs><pattern id="hp" width="5" height="5" patternUnits="userSpaceOnUse"><rect width="5" height="5" fill="#fff"/><path d="M0 0l5 5M5 0l-5 5" stroke="#cfcfcf" stroke-width=".8"/></pattern></defs><rect x="5" y="5" width="55" height="32" fill="url(#hp)"/>`;}
 if(k=='line'||k=='dark'){for(let i=0;i<5;i++)o+=`<rect x="3" y="${5+i*7}" width="56" height="1" fill="${dark?'#5a5a5a':'#e2e2e2'}"/>`;}
 tb.forEach((v,i)=>{const x=6+i*4.6,w=k=='plain'?3.6:2.2,c=k=='plain'?'#b6944a':(dark?'#9a7a20':'#a87c0a');
  o+=`<rect x="${x}" y="${37-v}" width="${w}" height="${v}" fill="${c}"/><rect x="${x}" y="${37-v}" width="${w}" height="2" fill="${i%3?'#f2b98e':'#4a7eb3'}"/><rect x="${x}" y="37" width="${w}" height="1.5" fill="#3f6ea8"/>`;});
 o+=`<rect x="3" y="38" width="56" height=".8" fill="${dark?'#aaa':'#bbb'}"/>`;
 for(let i=0;i<8;i++){o+=`<rect x="63" y="${6+i*4}" width="${[6,8,13,12,5,6,7,10][i]}" height="1" fill="${dark?'#ddd':'#444'}"/><rect x="63" y="${6+i*4+1.2}" width="${[4,6,9,8,3,4,5,7][i]}" height=".8" fill="${dark?'#aaa':'#999'}"/>`;}
 t.innerHTML=o;
});
</script>
<script src="https://cdn.jsdelivr.net/npm/bootstrap@5.3.0/dist/js/bootstrap.bundle.min.js"></script>
</body>
</html>
